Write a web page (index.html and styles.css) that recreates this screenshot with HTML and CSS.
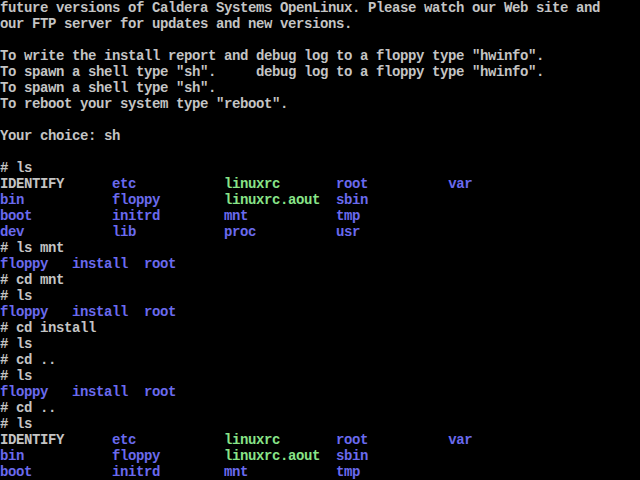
FILE: index.html
```html
<!DOCTYPE html>
<html lang="en">
<head>
  <meta charset="UTF-8">
  <title>OpenLinux install console</title>
  <link rel="stylesheet" href="styles.css">
</head>
<body>
  <div class="screen">
    <div class="line">future versions of Caldera Systems OpenLinux. Please watch our Web site and</div>
    <div class="line">our FTP server for updates and new versions.</div>
    <div class="line"> </div>
    <div class="line">To write the install report and debug log to a floppy type "hwinfo".</div>
    <div class="line">To spawn a shell type "sh".     debug log to a floppy type "hwinfo".</div>
    <div class="line">To spawn a shell type "sh".</div>
    <div class="line">To reboot your system type "reboot".</div>
    <div class="line"> </div>
    <div class="line">Your choice: sh</div>
    <div class="line"> </div>
    <div class="line"># ls</div>
    <div class="line">IDENTIFY      <span class="dir">etc</span>           <span class="exe">linuxrc</span>       <span class="dir">root</span>          <span class="dir">var</span></div>
    <div class="line"><span class="dir">bin</span>           <span class="dir">floppy</span>        <span class="exe">linuxrc.aout</span>  <span class="dir">sbin</span></div>
    <div class="line"><span class="dir">boot</span>          <span class="dir">initrd</span>        <span class="dir">mnt</span>           <span class="dir">tmp</span></div>
    <div class="line"><span class="dir">dev</span>           <span class="dir">lib</span>           <span class="dir">proc</span>          <span class="dir">usr</span></div>
    <div class="line"># ls mnt</div>
    <div class="line"><span class="dir">floppy</span>   <span class="dir">install</span>  <span class="dir">root</span></div>
    <div class="line"># cd mnt</div>
    <div class="line"># ls</div>
    <div class="line"><span class="dir">floppy</span>   <span class="dir">install</span>  <span class="dir">root</span></div>
    <div class="line"># cd install</div>
    <div class="line"># ls</div>
    <div class="line"># cd ..</div>
    <div class="line"># ls</div>
    <div class="line"><span class="dir">floppy</span>   <span class="dir">install</span>  <span class="dir">root</span></div>
    <div class="line"># cd ..</div>
    <div class="line"># ls</div>
    <div class="line">IDENTIFY      <span class="dir">etc</span>           <span class="exe">linuxrc</span>       <span class="dir">root</span>          <span class="dir">var</span></div>
    <div class="line"><span class="dir">bin</span>           <span class="dir">floppy</span>        <span class="exe">linuxrc.aout</span>  <span class="dir">sbin</span></div>
    <div class="line"><span class="dir">boot</span>          <span class="dir">initrd</span>        <span class="dir">mnt</span>           <span class="dir">tmp</span></div>
  </div>
</body>
</html>
```

FILE: styles.css
```css
html {
  background: #000;
  overflow: hidden;
}
body {
  margin: 0;
  padding: 0;
  background: #000;
}
.screen {
  width: 640px;
  height: 480px;
  font-family: "Liberation Mono", "DejaVu Sans Mono", monospace;
  font-size: 14px;
  letter-spacing: -0.4px;
  font-weight: bold;
  color: #c4c4c4;
}
.line {
  height: 16px;
  line-height: 16px;
  white-space: pre;
}
.dir {
  color: #6a6aee;
}
.exe {
  color: #88e488;
}
```
